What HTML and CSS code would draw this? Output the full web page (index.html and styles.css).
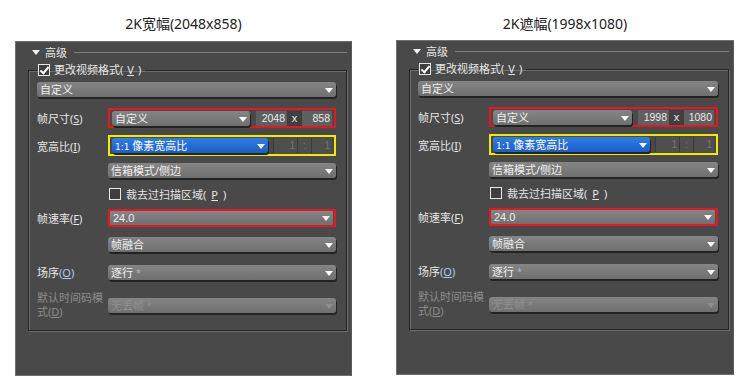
FILE: index.html
```html
<!DOCTYPE html>
<html>
<head>
    <meta charset="utf-8">
    <title>2K 视频格式设置</title>
    <link rel="stylesheet" href="styles.css">
</head>
<body>
    <div class="page">
        <section class="col">
            <h2 class="title">2K宽幅(2048x858)</h2>
            <div class="panel">
                <div class="section-head"><span class="tri"></span><span>高级</span><span class="rule"></span></div>
                <fieldset class="group">
                    <legend><span class="check on"></span>更改视频格式(<u>V</u>)</legend>
                    <div class="combo first">自定义</div>
                    <div class="row r-size">
                        <label>帧尺寸(<u>S</u>)</label>
                        <div class="frame red size">
                            <div class="combo">自定义</div>
                            <span class="num w1">2048</span><span class="sep">x</span><span class="num w2">858</span>
                        </div>
                    </div>
                    <div class="row r-aspect">
                        <label>宽高比(<u>I</u>)</label>
                        <div class="frame yellow size">
                            <div class="combo blue"><small>1:1</small> 像素宽高比</div>
                            <span class="dis d1">1</span><span class="dis d2">:</span><span class="dis d3">1</span>
                        </div>
                    </div>
                    <div class="row r-box">
                        <label></label>
                        <div class="combo">信箱模式/侧边</div>
                    </div>
                    <div class="row r-crop">
                        <label></label>
                        <div class="crop"><span class="check"></span>裁去过扫描区域(<u>P</u>)</div>
                    </div>
                    <div class="row r-rate">
                        <label>帧速率(<u>F</u>)</label>
                        <div class="frame red tight">
                            <div class="combo latin">24.0</div>
                        </div>
                    </div>
                    <div class="row r-blend">
                        <label></label>
                        <div class="combo">帧融合</div>
                    </div>
                    <div class="row r-field">
                        <label>场序<span class="hot">(<u>O</u>)</span></label>
                        <div class="combo">逐行 <i>*</i></div>
                    </div>
                    <div class="row r-tc">
                        <label class="off"><span>默认时间码模</span><span>式(<u>D</u>)</span></label>
                        <div class="combo disabled">无丢帧 <i>*</i></div>
                    </div>
                </fieldset>
            </div>
        </section>

        <section class="col">
            <h2 class="title">2K遮幅(1998x1080)</h2>
            <div class="panel">
                <div class="section-head"><span class="tri"></span><span>高级</span><span class="rule"></span></div>
                <fieldset class="group">
                    <legend><span class="check on"></span>更改视频格式(<u>V</u>)</legend>
                    <div class="combo first">自定义</div>
                    <div class="row r-size">
                        <label>帧尺寸(<u>S</u>)</label>
                        <div class="frame red size">
                            <div class="combo">自定义</div>
                            <span class="num w1">1998</span><span class="sep">x</span><span class="num w2">1080</span>
                        </div>
                    </div>
                    <div class="row r-aspect">
                        <label>宽高比(<u>I</u>)</label>
                        <div class="frame yellow size">
                            <div class="combo blue"><small>1:1</small> 像素宽高比</div>
                            <span class="dis d1">1</span><span class="dis d2">:</span><span class="dis d3">1</span>
                        </div>
                    </div>
                    <div class="row r-box">
                        <label></label>
                        <div class="combo">信箱模式/侧边</div>
                    </div>
                    <div class="row r-crop">
                        <label></label>
                        <div class="crop"><span class="check"></span>裁去过扫描区域(<u>P</u>)</div>
                    </div>
                    <div class="row r-rate">
                        <label>帧速率(<u>F</u>)</label>
                        <div class="frame red tight">
                            <div class="combo latin">24.0</div>
                        </div>
                    </div>
                    <div class="row r-blend">
                        <label></label>
                        <div class="combo">帧融合</div>
                    </div>
                    <div class="row r-field">
                        <label>场序<span class="hot">(<u>O</u>)</span></label>
                        <div class="combo">逐行 <i>*</i></div>
                    </div>
                    <div class="row r-tc">
                        <label class="off"><span>默认时间码模</span><span>式(<u>D</u>)</span></label>
                        <div class="combo disabled">无丢帧 <i>*</i></div>
                    </div>
                </fieldset>
            </div>
        </section>
    </div>
</body>
</html>
```

FILE: styles.css
```css
body {
    margin: 0;
    background-color: #fff;
    font-family: "Noto Sans", "Noto Sans CJK SC", sans-serif;
}

.page {
    display: flex;
    gap: 44px;
    padding-left: 15px;
}

.col {
    width: 337px;
}

.col + .col {
    width: 338px;
}

.title {
    margin: 0;
    height: 41px;
    box-sizing: border-box;
    padding-top: 14px;
    line-height: 20px;
    font-size: 14px;
    font-weight: normal;
    color: #222;
    text-align: center;
}

.col + .col .title {
    height: 40px;
}

.panel {
    height: 335px;
    box-sizing: border-box;
    background-color: #494949;
    border: 1px solid #707070;
    border-right-color: #5a5a5a;
    padding: 3px 4px 0 12px;
    color: #e6e6e6;
    font-size: 11px;
}

.section-head {
    display: flex;
    align-items: center;
    height: 14px;
    gap: 3px;
    margin-left: 4px;
}

.tri {
    width: 0;
    height: 0;
    border-left: 4px solid transparent;
    border-right: 4px solid transparent;
    border-top: 5px solid #f0f0f0;
    margin-right: 2px;
}

.rule {
    flex: 1;
    height: 1px;
    background-color: #7e7e7e;
    margin-left: 4px;
}

.group {
    margin: 4px 0 0 0;
    padding: 0 10px 11px 8px;
    border: 1px solid #262626;
    box-shadow: 1px 1px 0 #6c6c6c, inset 1px 1px 0 #6c6c6c;
    display: flex;
    flex-direction: column;
}

.group legend {
    padding: 0 4px 0 1px;
    height: 14px;
    line-height: 14px;
    display: flex;
    align-items: center;
    gap: 4px;
}

u {
    text-decoration: underline;
    text-underline-offset: 1px;
}

.check {
    width: 10px;
    height: 10px;
    border: 1px solid #e8e8e8;
    background-color: #3e3e3e;
    position: relative;
    flex-shrink: 0;
}

.check.on::after {
    content: "";
    position: absolute;
    left: 3px;
    top: 0;
    width: 3px;
    height: 7px;
    border-right: 2px solid #fff;
    border-bottom: 2px solid #fff;
    transform: rotate(40deg);
}

.combo {
    position: relative;
    height: 15px;
    line-height: 15px;
    padding-left: 3px;
    border-radius: 3px;
    background: linear-gradient(#858585, #6f6f6f);
    box-shadow: 1px 2px 0 #232323;
    color: #efefef;
    white-space: nowrap;
}

.combo::after {
    content: "";
    position: absolute;
    right: 3px;
    top: 6px;
    width: 0;
    height: 0;
    border-left: 4px solid transparent;
    border-right: 4px solid transparent;
    border-top: 5px solid #fafafa;
}

.combo i {
    font-style: normal;
    color: #a9b8c8;
    font-size: 9px;
    vertical-align: top;
}

.combo.first {
    margin-top: 5px;
}

.combo.disabled {
    color: #8e8e8e;
}

.combo.disabled::after {
    border-top-color: #8e8e8e;
}

.combo.disabled i {
    color: #8e8e8e;
}

.combo.latin {
    font-family: "Liberation Sans", sans-serif;
    font-size: 11px;
}

.combo.blue {
    background: linear-gradient(#2f7de6, #1a5ec9);
    color: #fff;
}

.combo.blue small {
    font-family: "DejaVu Sans", sans-serif;
    font-size: 9px;
}

.row {
    display: grid;
    grid-template-columns: 71px 1fr;
    align-items: center;
}

.row label {
    white-space: normal;
}

.row label.off {
    color: #8c8c8c;
    line-height: 14px;
    margin-top: -1px;
    align-self: start;
}

.row label.off span {
    display: block;
}

.hot {
    color: #b8cbe6;
}

.r-size { margin-top: 11px; }
.r-aspect { margin-top: 7px; }
.r-box { margin-top: 7px; }
.r-crop { margin-top: 9px; }
.r-rate { margin-top: 8px; }
.r-blend { margin-top: 10px; }
.r-field { margin-top: 12px; }
.r-tc { margin-top: 12px; }

.frame {
    border: 2px solid #e8161e;
    height: 20px;
    box-sizing: border-box;
    padding: 1px 2px 0;
}

.frame.yellow {
    border-color: #f2ea00;
    height: 21px;
}

.frame.tight {
    height: 18px;
    padding: 0 1px 0 0;
}

.frame.tight .combo {
    height: 14px;
    line-height: 14px;
    border-radius: 1px;
    box-shadow: none;
}

.frame.tight .combo::after {
    top: 5px;
}

.size {
    display: flex;
}

.size .combo {
    flex: 1;
}

.num {
    height: 15px;
    line-height: 15px;
    background-color: #5f5f5f;
    text-align: right;
    padding-right: 2px;
    font-family: "Liberation Sans", sans-serif;
    font-size: 10.5px;
    color: #ececec;
}

.num.w1 {
    width: 29px;
    margin-left: 6px;
}

.num.w2 {
    width: 28px;
}

.sep {
    width: 15px;
    height: 15px;
    line-height: 15px;
    background-color: #3f3f3f;
    text-align: center;
    font-family: "Liberation Sans", sans-serif;
    font-size: 11px;
    color: #ececec;
}

.dis {
    height: 15px;
    line-height: 15px;
    background-color: #4f4f4f;
    border-left: 1px solid #3a3a3a;
    color: #747474;
    font-family: "Liberation Sans", sans-serif;
    font-size: 10px;
    text-align: right;
    padding-right: 2px;
}

.dis.d1 {
    width: 21px;
    margin-left: 5px;
}

.dis.d2 {
    width: 13px;
    text-align: center;
    padding-right: 0;
}

.dis.d3 {
    width: 18px;
}

.crop {
    display: flex;
    align-items: center;
    gap: 5px;
    height: 14px;
    margin-left: 1px;
}

.crop .check {
    width: 10px;
    height: 10px;
}
```
